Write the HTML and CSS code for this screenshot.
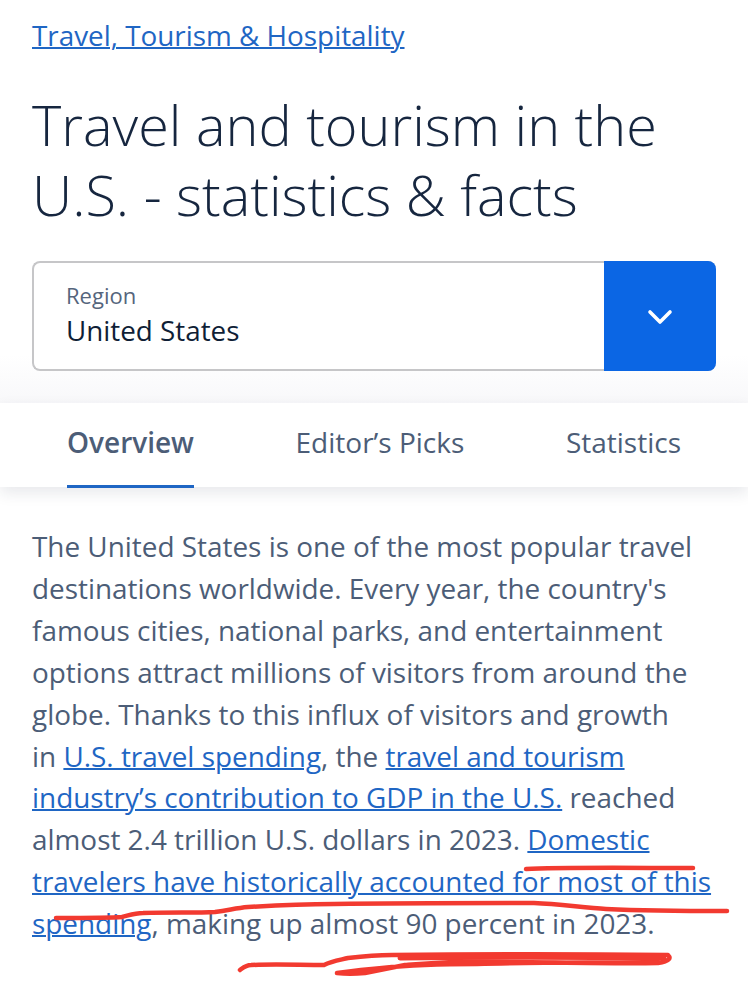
FILE: index.html
```html
<!DOCTYPE html>
<html lang="en">
<head>
<meta charset="utf-8">
<title>Travel and tourism in the U.S. - statistics &amp; facts</title>
<link rel="stylesheet" href="styles.css">
</head>
<body>
<div class="page">
  <header class="hero">
    <a class="crumb" href="#">Travel, Tourism &amp; Hospitality</a>
    <h1 class="title">Travel and tourism in the<br>U.S. - statistics &amp; facts</h1>
    <div class="select">
      <div class="select-text">
        <span class="select-label">Region</span>
        <span class="select-value">United States</span>
      </div>
      <div class="select-btn">
        <svg class="chev" width="26" height="16" viewBox="0 0 26 16"><path d="M3 3l10 10L23 3" fill="none" stroke="#fff" stroke-width="3.6" stroke-linecap="round" stroke-linejoin="round"/></svg>
      </div>
    </div>
  </header>
  <nav class="tabs">
    <a class="tab tab-active" href="#">Overview</a>
    <a class="tab" href="#">Editor’s Picks</a>
    <a class="tab" href="#">Statistics</a>
  </nav>
  <main class="content">
    <p class="para">The United States is one of the most popular travel<br>destinations worldwide. Every year, the country's<br>famous cities, national parks, and entertainment<br>options attract millions of visitors from around the<br>globe. Thanks to this influx of visitors and growth<br>in <a href="#">U.S. travel spending</a>, the <a href="#">travel and tourism<br>industry’s contribution to GDP in the U.S.</a> reached<br>almost 2.4 trillion U.S. dollars in 2023. <a href="#">Domestic<br>travelers have historically accounted for most of this<br>spending</a>, making up almost 90 percent in 2023.</p>
    <h2 class="next">Where do Americans travel?</h2>
  </main>
  <svg class="marks" width="748" height="1000" viewBox="0 0 748 1000" fill="none" stroke="#f23a30" stroke-linecap="round" stroke-linejoin="round">
    <path stroke-width="4.5" d="M526 869C560 867 640 868 693 868"/>
    <path stroke-width="4.5" d="M56 918C80 918 110 918 122 917C130 915 135 913 143 913C170 912 195 913 215 912C230 910 236 908 248 907C280 905 310 904 334 904C400 903 470 903 534 903C560 904 585 908 606 909C650 911 690 911 727 911"/>
    <path stroke-width="4.5" d="M240 970C244 967 246 965 251 965C275 964 300 965 324 965C332 961 340 960 348 958C365 956 375 955 392 955C480 954 580 954 668 955C671 958 670 961 658 963C590 964 520 961 453 962C430 963 418 964 405 965C385 969 375 971 365 973C355 974 345 974 337 973C352 971 370 969 382 968C420 964 450 964 477 964C540 962 600 963 658 962"/>
    <path stroke-width="5" d="M400 958C480 957 580 957 664 958"/>
  </svg>
</div>
</body>
</html>
```
FILE: styles.css
```css
html, body {
  margin: 0;
  padding: 0;
  background: #fff;
}
.page {
  position: relative;
  width: 748px;
  height: 1000px;
  overflow: hidden;
  font-family: "Open Sans", "Noto Sans", sans-serif;
}
.hero {
  display: flex;
  flex-direction: column;
  align-items: flex-start;
  padding: 14px 32px 32px;
  background: linear-gradient(#fff 0, #fff 355px, #f8f8fa 100%);
}
.crumb {
  font-size: 27.85px;
  line-height: 42px;
  color: #1f66c4;
  text-decoration: underline;
  text-decoration-thickness: 2px;
}
.title {
  margin: 33px 0 32px;
  font-size: 55.8px;
  line-height: 70px;
  font-weight: 300;
  color: #16263f;
}
.select {
  display: flex;
  width: 684px;
  height: 110px;
  box-sizing: border-box;
  border: 2px solid #c6c6c8;
  border-right: 0;
  border-radius: 8px;
  background: #fff;
}
.select-text {
  flex: 1;
  display: flex;
  flex-direction: column;
  padding: 16px 0 0 32px;
}
.select-label {
  font-size: 22px;
  line-height: 32px;
  color: #55657c;
}
.select-value {
  font-size: 27.8px;
  line-height: 38px;
  color: #0f1e36;
}
.select-btn {
  display: flex;
  align-items: center;
  justify-content: center;
  width: 112px;
  margin: -2px 0;
  background: #0b66e4;
  border-radius: 0 8px 8px 0;
}
.chev {
  margin-top: 2px;
}
.tabs {
  position: relative;
  display: flex;
  justify-content: space-between;
  height: 84px;
  box-sizing: border-box;
  padding: 0 67px;
  background: #fff;
  box-shadow: 0 6px 14px rgba(30, 40, 70, 0.1);
}
.tab {
  font-size: 28px;
  line-height: 78px;
  color: #4c5d77;
  text-decoration: none;
  height: 85px;
  box-sizing: border-box;
}
.tab-active {
  font-weight: 600;
  border-bottom: 3px solid #1f66c4;
}
.content {
  padding: 39px 32px 0;
}
.para {
  margin: 0;
  font-size: 27.9px;
  line-height: 41.9px;
  color: #4c5d77;
}
.para a {
  color: #1f66c4;
  text-decoration: underline;
  text-decoration-thickness: 2px;
}
.next {
  margin: 47px 0 0;
  font-size: 36px;
  line-height: 44px;
  font-weight: 400;
  color: #16263f;
  white-space: nowrap;
}
.marks {
  position: absolute;
  left: 0;
  top: 0;
  pointer-events: none;
}
```
